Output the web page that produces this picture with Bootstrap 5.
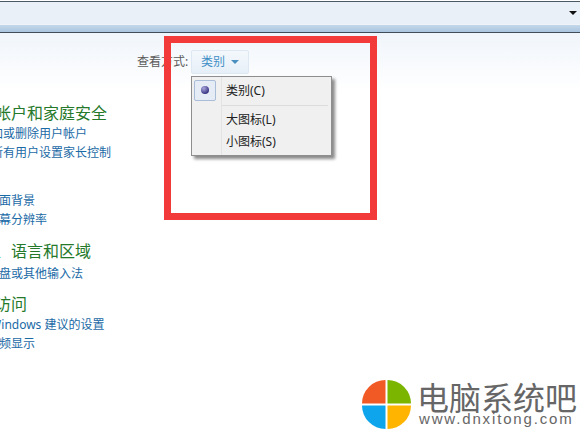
<!DOCTYPE html>
<html lang="zh-CN">
<head>
  <meta charset="UTF-8" />
  <meta name="viewport" content="width=device-width, initial-scale=1.0"/>
  <title>控制面板</title>
  <link href="https://cdn.jsdelivr.net/npm/bootstrap@5.3.0/dist/css/bootstrap.min.css" rel="stylesheet">
  <style>
    html, body {
      height: 429px;
      overflow: hidden;
    }
    body {
      background: #fff;
      font-family: "Noto Sans", "Noto Sans CJK SC", sans-serif;
      font-size: 12px;
      position: relative;
    }
    .addr-bar {
      height: 23px;
      margin-top: 1px;
      background: #e9f0f8;
      border-top: 1px solid #4c5862;
    }
    .addr-arrow {
      width: 0;
      height: 0;
      border-left: 4px solid transparent;
      border-right: 4px solid transparent;
      border-top: 4px solid #111;
      margin-right: 3px;
    }
    .cmd-bar {
      height: 9px;
      background: linear-gradient(#c5d8ea, #a9c5e0);
      border-top: 1px solid #eef4fa;
      border-bottom: 1px solid #3f4d5a;
    }
    .panel-body {
      background: linear-gradient(#f0f5fb, #fff 58px);
      height: 396px;
    }
    .view-row {
      padding: 17px 0 0 137px;
      height: 70px;
    }
    .view-label {
      color: #5a5a5a;
      width: 54px;
      line-height: 24px;
    }
    .view-btn {
      width: 58px;
      height: 24px;
      padding: 0 0 0 9px;
      font-size: 12px;
      color: #3f8fc6;
      background: linear-gradient(#f4f8fc, #e6eff8);
      border: 1px solid #dde8f2;
      border-radius: 2px;
      line-height: 22px;
    }
    .view-caret {
      width: 0;
      height: 0;
      border-left: 4px solid transparent;
      border-right: 4px solid transparent;
      border-top: 4px solid #4a8fc0;
      margin-left: 6px;
    }
    .view-menu.dropdown-menu {
      top: 26px;
      left: 0;
      width: 141px;
      height: 80px;
      min-width: 0;
      padding: 3px 0 0;
      background: linear-gradient(90deg, #f0f0f0 29px, #e3e3e3 29px, #e3e3e3 30px, #f0f0f0 30px);
      border: 1px solid #8e8e8e;
      border-radius: 0;
      box-shadow: 3px 3px 3px #8a8a8a;
      font-size: 12px;
    }
    .view-menu .dropdown-item {
      height: 22px;
      line-height: 22px;
      padding: 0 0 0 34px;
      color: #222;
      position: relative;
    }
    .view-menu .first-item {
      height: 21px;
    }
    .view-menu .dropdown-divider {
      margin: 4px 3px 3px 30px;
      border-color: #dcdcdc;
      opacity: 1;
    }
    .check-box {
      position: absolute;
      left: 2px;
      top: 0;
      width: 22px;
      height: 21px;
      background: #e6ecf6;
      border: 1px solid #a9bdd8;
      border-radius: 2px;
    }
    .check-dot {
      position: absolute;
      left: 6px;
      top: 5px;
      width: 8px;
      height: 8px;
      border-radius: 50%;
      background: radial-gradient(circle at 35% 30%, #a9a6dd, #35317f 75%);
    }
    .cat-list {
      margin-left: -37px;
      width: 200px;
    }
    .cat-title {
      font-size: 16px;
      line-height: 21px;
      color: #25792a;
    }
    .cat-link {
      display: block;
      line-height: 19px;
      color: #1a6aa6;
      text-decoration: none;
      white-space: nowrap;
    }
    .shielded {
      padding-left: 16px;
    }
    .gap-look { margin-top: 29px; }
    .gap-clock { margin-top: 12px; }
    .gap-ease { margin-top: 11px; }
    .gap-title { margin-top: 2px; }
    .red-frame {
      position: absolute;
      left: 164px;
      top: 36px;
      width: 213px;
      height: 184px;
      border: 7px solid #f23a3a;
    }
    .site-mark {
      position: absolute;
      left: 362px;
      top: 380px;
    }
    .site-name {
      position: absolute;
      left: 417px;
      top: 376px;
      font-size: 32px;
      line-height: 40px;
      color: #666;
      font-family: "Noto Sans CJK SC", sans-serif;
      white-space: nowrap;
    }
    .site-url {
      position: absolute;
      left: 419px;
      top: 410px;
      font-family: "Liberation Sans", sans-serif;
      font-size: 15px;
      line-height: 18px;
      letter-spacing: 1.85px;
      color: #666;
      white-space: nowrap;
    }
  </style>
</head>
<body>
  <div class="addr-bar d-flex justify-content-end align-items-center">
    <span class="addr-arrow"></span>
  </div>
  <div class="cmd-bar"></div>

  <div class="panel-body">
    <div class="view-row d-flex">
      <span class="view-label">查看方式:</span>
      <div class="dropdown">
        <button class="view-btn d-flex align-items-center" type="button">类别<span class="view-caret"></span></button>
        <div class="dropdown-menu show view-menu">
          <a class="dropdown-item first-item" href="#"><span class="check-box"><span class="check-dot"></span></span>类别(C)</a>
          <hr class="dropdown-divider">
          <a class="dropdown-item" href="#">大图标(L)</a>
          <a class="dropdown-item" href="#">小图标(S)</a>
        </div>
      </div>
    </div>

    <div class="cat-list">
      <div class="cat-title">用户帐户和家庭安全</div>
      <a class="cat-link shielded" href="#">添加或删除用户帐户</a>
      <a class="cat-link shielded" href="#">为所有用户设置家长控制</a>

      <a class="cat-link gap-look" href="#">更改桌面背景</a>
      <a class="cat-link" href="#">调整屏幕分辨率</a>

      <div class="cat-title gap-clock">时钟、语言和区域</div>
      <a class="cat-link gap-title" href="#">更改键盘或其他输入法</a>

      <div class="cat-title gap-ease">轻松访问</div>
      <a class="cat-link" href="#">使用 Windows 建议的设置</a>
      <a class="cat-link" href="#">优化视频显示</a>
    </div>
  </div>

  <div class="red-frame"></div>

  <svg class="site-mark" width="49" height="49" viewBox="0 0 49 49">
    <path d="M23.5 23.5H0A23.5 23.5 0 0 1 23.5 0Z" fill="#f15a24"/>
    <path d="M25.5 23.5V0A23.5 23.5 0 0 1 49 23.5Z" fill="#7cb500"/>
    <path d="M23.5 25.5V49A23.5 23.5 0 0 1 0 25.5Z" fill="#0ea5ec"/>
    <path d="M25.5 25.5H49A23.5 23.5 0 0 1 25.5 49Z" fill="#ffb400"/>
  </svg>
  <div class="site-name">电脑系统吧</div>
  <div class="site-url">www.dnxitong.com</div>

  <script src="https://cdn.jsdelivr.net/npm/bootstrap@5.3.0/dist/js/bootstrap.bundle.min.js"></script>
</body>
</html>
